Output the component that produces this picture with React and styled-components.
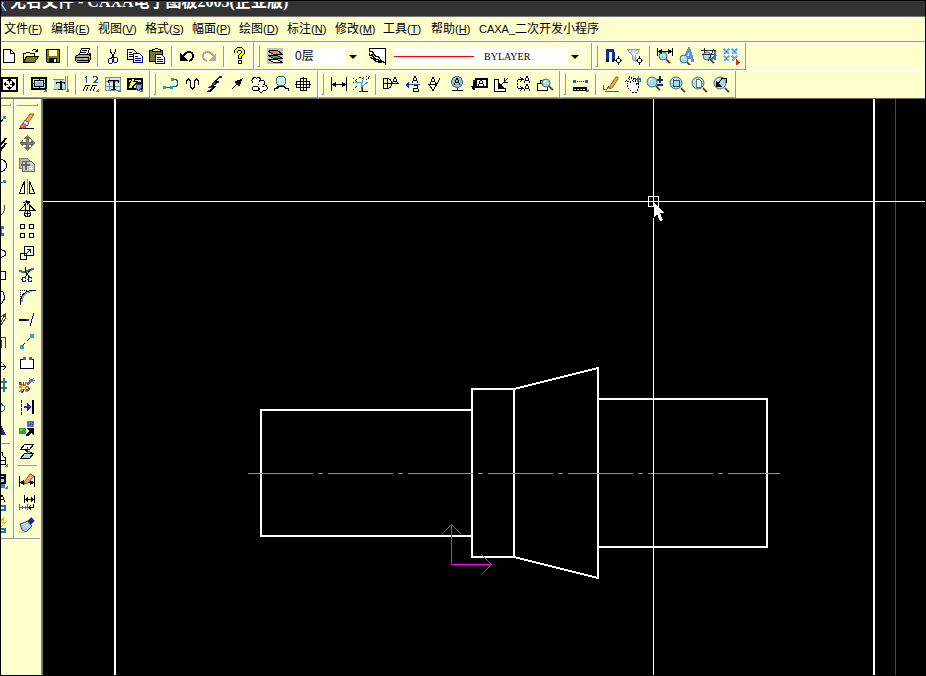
import React from 'react';
import styled, { createGlobalStyle } from 'styled-components';

const cream = '#ffffcc';
const shade = '#999999';

const GlobalStyle = createGlobalStyle`
  * { box-sizing: border-box; }
  html, body { margin: 0; padding: 0; background: #000; }
  body, button, select {
    font-family: "Liberation Sans", "Noto Sans CJK SC", sans-serif;
    font-size: 12px;
    color: #000;
  }
`;

const Window = styled.div`
  min-height: 100vh;
  display: flex;
  flex-direction: column;
  border: 1px solid #000;
  background: ${cream};
  overflow: hidden;
`;

const TitleBar = styled.header`
  height: 16px;
  flex: none;
  display: flex;
  align-items: flex-end;
  background: #333;
  border-top: 1px solid #3a2f55;
  border-bottom: 1px solid #777;
  overflow: hidden;
`;

const TitleLogo = styled.svg`
  flex: none;
  width: 7px;
  height: 14px;
`;

const Title = styled.h1`
  margin: 0;
  padding: 0 2px 5px;
  font: bold 16px/18px "Liberation Serif", "Noto Sans CJK SC", serif;
  color: #fff;
  white-space: nowrap;
`;

const MenuBar = styled.nav`
  height: 25px;
  flex: none;
  display: flex;
  align-items: center;
  padding-left: 3px;
  border-bottom: 1px solid ${shade};
`;

const MenuItem = styled.button`
  flex: none;
  min-width: ${(p) => (p.$wide ? 48 : 47)}px;
  padding: 0;
  border: 0;
  background: none;
  text-align: left;
  line-height: 18px;
  white-space: nowrap;
`;

const Accel = styled.span`
  font-size: 11px;
`;

const ToolRow = styled.div`
  height: 28px;
  flex: none;
  display: flex;
  border-top: 1px solid #fff;
`;

const Toolbar = styled.div`
  flex: none;
  display: flex;
  align-items: center;
  padding-right: 3px;
  margin-left: ${(p) => (p.$docked ? -3 : 0)}px;
  border-right: 1px solid ${shade};
  border-bottom: 1px solid ${shade};
  & + & { border-left: 1px solid #fff; }
`;

const Grip = styled.span`
  flex: none;
  width: ${(p) => (p.$flat ? 22 : 3)}px;
  height: ${(p) => (p.$flat ? 3 : 22)}px;
  margin: ${(p) => (p.$flat ? '4px 0' : '0 4px 0 2px')};
  border: 1px solid ${shade};
  border-top-color: #fff;
  border-left-color: #fff;
`;

const Divider = styled.span`
  flex: none;
  width: ${(p) => (p.$flat ? 20 : 2)}px;
  height: ${(p) => (p.$flat ? 2 : 21)}px;
  margin: ${(p) => (p.$flat ? '3px 1px' : '0 3px')};
  background: linear-gradient(${(p) => (p.$flat ? '180deg' : '90deg')}, ${shade} 50%, #fff 50%);
`;

const ToolButton = styled.button`
  flex: none;
  width: 22px;
  height: 22px;
  display: grid;
  place-items: center;
  padding: 0;
  border: 0;
  background: none;
`;

const Glyph = styled.svg`
  display: block;
  width: 18px;
  height: 18px;
  shape-rendering: crispEdges;
`;

const Combo = styled.label`
  position: relative;
  flex: none;
  width: ${(p) => (p.$wide ? 190 : 70)}px;
  margin: 0 5px;
`;

const ComboSelect = styled.select`
  appearance: none;
  display: block;
  width: 100%;
  height: 17px;
  padding: 0 16px 0 ${(p) => (p.$wide ? 91 : 4)}px;
  border: 0;
  border-radius: 0;
  background: #fff;
  font: ${(p) => (p.$wide ? '10px/17px "Liberation Serif", serif' : '12px/17px "Liberation Sans", "Noto Sans CJK SC", sans-serif')};
`;

const ComboArrow = styled.svg`
  position: absolute;
  top: 1px;
  right: 1px;
  width: 14px;
  height: 15px;
  background: ${cream};
  pointer-events: none;
`;

const LineSample = styled.span`
  position: absolute;
  top: 8px;
  left: 1px;
  width: 80px;
  height: 1px;
  background: #ff0000;
  pointer-events: none;
`;

const Workspace = styled.main`
  flex: 1;
  display: flex;
  border-top: 1px solid #666;
  min-height: 500px;
`;

const Docks = styled.aside`
  flex: none;
  display: flex;
  align-items: flex-start;
  padding-right: 1px;
  border-right: 2px solid #777;
`;

const Palette = styled.div`
  display: flex;
  flex-direction: column;
  align-items: center;
  padding: 0 2px 2px 2px;
  margin-left: ${(p) => (p.$docked ? -14 : 0)}px;
  border-bottom: 1px solid ${shade};
  & + & { border-left: 1px solid ${shade}; box-shadow: inset 1px 0 #fff; }
`;

const Canvas = styled.svg`
  flex: 1;
  min-width: 0;
  display: block;
  background: #000;
  cursor: crosshair;
`;

const P = ({ d, c = '#000', f = 'none', w = 1, dash }) => (
  <path d={d} stroke={c} fill={f} strokeWidth={w} strokeDasharray={dash} />
);
const F = ({ d, c = '#000' }) => <path d={d} fill={c} />;
const Lens = ({ x = 8, y = 7, r = 5 }) => (
  <g shapeRendering="auto">
    <P d={`M${x + r - 1} ${y + r - 1}l4 4`} c="#4c3a38" w={2} />
    <P d={`M${x + r} ${y + r - 1}l3 3`} c="#b98a70" />
    <circle cx={x} cy={y} r={r} fill="#a9dce6" stroke="#3f6f7a" />
    <path d={`M${x - r + 2} ${y}a${r - 2} ${r - 2} 0 0 1 ${r - 2} ${2 - r}`} stroke="#fff" fill="none" />
  </g>
);
const Corner = () => <F d="M17 13v4h-4z" c="#777" />;
const LetterA = ({ x, y, c = '#000' }) => <P d={`M${x} ${y + 7}l3-7 3 7M${x + 1} ${y + 4.5}h4`} c={c} />;

const icons = {
  new: <P d="M3.500 2.500h7l4 4v9h-11zM10.500 2.500v4h4" f="#fff" />,
  open: (
    <>
      <P d="M1.500 14.500v-8h2l1-1h3l1 1h4v3" f="#ffff80" />
      <P d="M1.500 15.500l3-6h12l-4 6z" f="#808000" />
      <P d="M9.500 4.500l2-2h2l2 2M15.500 1.500v3h-3" />
    </>
  ),
  save: (
    <>
      <P d="M2.500 2.500h13v13h-12l-1-1z" f="#808000" />
      <F d="M5 3h8v6H5z" c={cream} />
      <F d="M5 11h8v5H5z" />
      <F d="M10 12h2v3h-2z" c={cream} />
    </>
  ),
  print: (
    <>
      <P d="M5.500 7.500l2-6h8l-2 6M8 3.500h5M7 5.500h5" f="#fff" />
      <P d="M1.500 9.500l3-2h10l2-1v6l-2 3h-11l-2-2z" f="#aaa" />
      <P d="M2 10.500h12v5M3 13.500h11M15 9l1-1" />
      <F d="M10 11h3v1h-3z" c="#dddd22" />
    </>
  ),
  cut: (
    <>
      <P d="M6.500 1.500v3l4 7M11.500 1.500v3l-4 7" />
      <ellipse cx="6.500" cy="14" rx="2" ry="2.500" stroke="#000080" fill="none" />
      <ellipse cx="11.500" cy="13" rx="2" ry="2.500" stroke="#000080" fill="none" />
    </>
  ),
  copy: (
    <>
      <P d="M1.500 2.500h6l3 3v7h-9z" f="#fff" />
      <P d="M3 5.500h3M3 7.500h4M3 9.500h4" />
      <P d="M7.500 6.500h6l3 3v6h-9z" c="#000080" f="#fff" />
      <P d="M9 9.500h3M9 11.500h6M9 13.500h6" c="#000080" />
    </>
  ),
  paste: (
    <>
      <P d="M1.500 3.500h13v11h-13z" f="#77733f" />
      <P d="M4.500 4.500v-2h2l1-1h2l1 1h2v2z" f="#ffff66" />
      <P d="M7.500 7.500h6l3 3v6h-9z" c="#000080" f="#fff" />
      <P d="M9 10.500h4M9 12.500h6M9 14.500h6" c="#000080" />
    </>
  ),
  undo: (
    <>
      <P d="M5 9c3-5 10-5 10 0 0 3-2 4-4 5" w={2} />
      <F d="M2 6v8h8z" />
    </>
  ),
  redo: (
    <>
      <P d="M14 9C11 4 3 4 3 9c0 3 2 4 4 5" c="#aaa" w={2} />
      <F d="M16 6v8H8z" c="#aaa" />
    </>
  ),
  help: (
    <>
      <P d="M6 6V4l2-2h3l2 2v2l-3 3v3" w={4} />
      <P d="M6 6V4l2-2h3l2 2v2l-3 3v2" c="#ffff00" w={2} />
      <circle cx="10" cy="15" r="2" fill="#ffff00" stroke="#000" />
    </>
  ),
  layers: (
    <>
      <F d="M1 1h16v16H1z" c="#c0c0c0" />
      <P d="M2.500 12.500h9l5 3h-9z" f="#fff" />
      <P d="M2.500 8.500h9l5 3h-9z" f="#20c060" />
      <P d="M2.500 4.500l2-1h7l5 4h-9z" f="#ff7777" />
    </>
  ),
  linetype: (
    <>
      <F d="M2 2h15v15z" c="#fff" />
      <P d="M1 1.500h16.500v16" />
      <P d="M1.500 2v2l3 1 3 4 3 1 3 4 4 2M1.500 6v2l3 1 3 3 3 1 3 3M2 10l3 2 3 2 5 2" />
      <P d="M2 4h3M3 7h4M3 11h5M7 14h6" />
    </>
  ),
  magnet: (
    <>
      <P d="M3 14V5q0-2 2-2h2q2 0 2 2v9" c="#10309a" w={3} />
      <F d="M2 12h3v3H2zM8 12h2v3H8z" c="#101840" />
      <circle cx="14.500" cy="13.500" r="2" stroke="#000" fill={cream} />
      <P d="M14.500 9v3M14.500 15v3M11 13.500h2M16 13.500h2" />
    </>
  ),
  filter: (
    <>
      <P d="M1.500 2.500h12l-4 6v6l-3-2v-4z" c="#68a0df" f="#a9d0f4" />
      <P d="M3 4l8 4M12 4L6 8M7 3l2 7" c="#fff" />
      <circle cx="13.500" cy="13.500" r="2" stroke="#000" fill={cream} />
      <P d="M13.500 9v3M13.500 15v3M10 13.500h2M15 13.500h2" />
    </>
  ),
  findDim: (
    <>
      <Lens x={7} y={9} r={4} />
      <P d="M1.500 1v8M16.500 1v8M2 4.500h14" />
      <F d="M2 4.500l4-3v6zM16 4.500l-4-3v6z" />
    </>
  ),
  findText: (
    <>
      <P d="M6 12L11 2l4 13M8 10h6" c="#5c90ee" w={3} />
      <Lens x={6} y={12} r={4} />
    </>
  ),
  findCross: (
    <>
      <Lens x={7} y={9} r={4} />
      <P d="M1 3h15M4 1v5M2 7h14M14 2L8 14" c="#202838" />
      <P d="M11 13l5-5M15 4v9" c="#3478ba" w={2} />
    </>
  ),
  blocks: (
    <>
      <P d="M2 2l5 5M7 2L2 7M10 2l5 5M15 2l-5 5M2 9l5 5M7 9l-5 5M10 9l3 3M15 9l-5 5" c="#64b0f4" w={2} />
      <F d="M4 4h1v1H4zM12 4h1v1h-1zM4 11h1v1H4z" c="#246ca8" />
      <F d="M14 12l4 3-4 4z" c="#ee2415" />
    </>
  ),
  fitAll: (
    <>
      <P d="M1.500 2.500h15v13h-15z" w={2} f="#fff" />
      <F d="M9 3l3 3H6zM9 15l3-3H6zM3 9l3-3v6zM15 9l-3-3v6z" />
      <P d="M5 9.500h3M10 9.500h3M9.500 5v3M9.500 11v3" />
    </>
  ),
  frame: (
    <>
      <P d="M2 3h14v11H2z" w={2} f="#bde7ed" />
      <P d="M4.500 5.500h9v6h-9zM9 2v4M9 11v3M2 8.500h3M13 8.500h3" />
      <F d="M6 7h6v4H6z" c="#8ab9e8" />
      <Corner />
    </>
  ),
  titleBlock: (
    <>
      <F d="M2 4h11v10H2z" c="#b9dfe6" />
      <P d="M1 4.500h11M15.500 1v14M13.500 1v13M1 14.500h13" c="#6e8c98" />
      <P d="M4 7h9M4.500 7v2M12.500 7v2M6 14h5" />
      <P d="M9 6v8" w={2} />
      <Corner />
    </>
  ),
  numbering: (
    <>
      <P d="M4.500 1v7M3 2.500h2M11 2.500l1-1h2l1 1v2l-3 3h4" c="#1b56a0" />
      <P d="M1 16l3-6h4M8 16l3-6h4M4 16l2-4M11 16l2-4" />
      <Corner />
    </>
  ),
  table: (
    <>
      <P d="M1.500 2.500h15v13h-15zM1 6.500h15M1 11.500h15M5.500 2v13" c="#6d929a" f="#ceedf0" />
      <P d="M4 5h11M4.500 5v3M14.500 5v3M7 14h5" />
      <P d="M9.500 5v9" w={2} />
      <Corner />
    </>
  ),
  tableEdit: (
    <>
      <P d="M1.500 3.500h14v10h-14zM1 7.500h14M6.500 3v10" f="#d7dabb" w={2} />
      <P d="M3 11l3-8h4L8 6h4l-7 8" f="#ffff00" />
      <P d="M10 9h5v4l-2 3-3-2z" f="#7f9ccc" c="#334f80" />
      <Corner />
    </>
  ),
  chain: (
    <>
      <P d="M2 12h9q5 0 5-4t-6-4" c="#005d84" />
      <F d="M1 11h3v3H1zM8 11h3v3H8zM9 3h3v3H9z" c="#19a4b8" />
    </>
  ),
  wave: <P d="M2.500 9V6l2-2 2 2v6l2 2 2-2V6l2-2 2 2v4" />,
  zigzag: (
    <>
      <P d="M2 15.500h2l4-4h-3l6-4h-3l6-6h2" c="#1741c5" w={2} />
      <P d="M1 16.500h3l5-5h-3l6-5h-3l6-5" />
    </>
  ),
  arrow: (
    <>
      <P d="M4 14L12 6" w={1} />
      <F d="M15 3l-4 9-5-5z" />
    </>
  ),
  cloud: (
    <>
      <P d="M3.500 7.500c-4-1 0-7 3-4 2-3 5 0 3 3 3-3 7 0 4 3 6 1 4 7 0 6-2 4-6 1-4-2M2.500 13.500c0-3 6-3 6 0s-6 3-6 0z" f="#fffff0" />
      <F d="M8 9h1v1H8zM12 11h2v1h-2z" />
    </>
  ),
  balloon: (
    <>
      <circle cx="9" cy="6" r="5" fill="#cdeff2" stroke="#35727b" />
      <P d="M2.500 16v-3h3l2-2h4l2 2h3v3M6 11l-2 3M12 11l2 3" />
    </>
  ),
  crossView: <P d="M2.500 6.500h13v6h-13zM6.500 3.500h6v12h-6zM1 9.500h16M9.500 2v14" />,
  dimension: (
    <>
      <P d="M1.500 2v14M16.500 2v14M2 9.500h14" />
      <F d="M2 9.500l4-3v6zM16 9.500l-4-3v6z" />
    </>
  ),
  coordinate: (
    <>
      <P d="M1 3l5 5M1 8l4-4M1 15l4-4M7 2l4 2M14 1l3 3M14 5l4-4" dash="2 1" />
      <P d="M10 11v5M7 16h9" />
      <P d="M3 7l7 1 2-6M9 8v9M9 12l7-5" c="#329eff" />
    </>
  ),
  datumA: (
    <>
      <P d="M1.500 3.500h3q5 0 5 5t-5 5h-3zM1 8.500h16M5.500 4v9" />
      <LetterA x={10} y={2} />
    </>
  ),
  datumAB: (
    <>
      <LetterA x={8} y={1} />
      <P d="M9.500 10.500h4v3h-4v3h5v-3" />
      <P d="M2 9h14" c="#185bee" />
      <F d="M1 10l4-3v6z" c="#0030cc" />
    </>
  ),
  roughness: (
    <>
      <P d="M2 9.500h9M3 9l4 7 7-13" />
      <LetterA x={4} y={2} />
    </>
  ),
  globeA: (
    <>
      <circle cx="9" cy="7" r="5.500" fill="#8dc2d4" stroke="#40778a" />
      <LetterA x={6} y={3} />
      <P d="M4 15.500h11M9.500 13v3" />
    </>
  ),
  noteA: (
    <>
      <P d="M5.500 3.500h11v8h-11z" w={2} f="#fff" />
      <P d="M3.500 15V5.500h3" w={2} />
      <LetterA x={8} y={4} />
      <F d="M1 11h6l-3 5z" />
    </>
  ),
  corner: (
    <>
      <P d="M2.500 4v12.500h11v-3h-7V4z" f="#fff" />
      <P d="M7 12l5-5 4-4M12 3v4h4" />
      <F d="M7 13V8l5 5z" />
    </>
  ),
  replaceA: (
    <>
      <P d="M3.500 13.500h5M3.500 4.500h5" />
      <P d="M3.500 5v8" dash="2 1" />
      <P d="M6 2l3 2.500-3 2M6 11l3 2.500-3 2" />
      <LetterA x={10} y={1} />
      <LetterA x={10} y={9} />
    </>
  ),
  findBox: (
    <>
      <P d="M1.500 8.500h10v7h-10zM4 8V5h8" />
      <Lens x={10} y={8} r={4} />
    </>
  ),
  measure: (
    <>
      <P d="M3 6.500h12" dash="1 1" />
      <F d="M1 5h3v3H1zM13 5h3v3h-3z" c="#1761ca" />
      <P d="M1.500 12.500h13v3h-13z" f="#000" />
      <P d="M2 14h12" c="#e8e838" dash="2 1" />
      <Corner />
    </>
  ),
  brush: (
    <>
      <P d="M1 10v5l4-1 2-3M3 16.500h14" c="#785332" />
      <g shapeRendering="auto"><P d="M8 11L14 2h2v2L10 13l-3 1z" c="#a66622" f="#f3a13f" /></g>
    </>
  ),
  pan: (
    <>
      <P d="M4 9L1.500 6.500l1-1 4 2-2-5 2-1 3 5V3l2 1 1 5 2-1v4l-2 5H8L3 12z" f="#fff" dash="2 1" />
      <P d="M11 4.500h6M14.500 1v7M13 3h3v3h-3z" c="#2c6f8f" />
    </>
  ),
  zoomSigns: (
    <>
      <Lens x={6} y={7} />
      <P d="M11 5h6M14 1v7M11 10h6" c="#102b72" w={2} />
    </>
  ),
  zoomWindow: (
    <>
      <Lens x={8} y={8} r={6} />
      <P d="M5.500 4v7h6M5 5.500h6.500V12" c="#254e7d" />
    </>
  ),
  zoomPage: (
    <>
      <Lens x={8} y={8} r={6} />
      <P d="M6.500 4.500h3l2 2v6h-5z" c="#68716a" f="#f2f4d9" />
    </>
  ),
  zoomBack: (
    <>
      <Lens x={8} y={8} r={6} />
      <P d="M14.500 8V3.500H10L6 9" />
      <F d="M4 12V6l6 6z" />
    </>
  ),
  eraser: (
    <>
      <P d="M1 16.500h15" />
      <g shapeRendering="auto">
        <P d="M7 9l5-7h4l-6 9z" c="#805024" f="#ffb038" />
        <P d="M2 15l3-4 4 2-2 3H3z" c="#a5453b" f="#ff6a60" />
        <P d="M5 11l2-3 4 3-2 3z" c="#557" f="#eef" />
      </g>
    </>
  ),
  move: (
    <>
      <F d="M9 1l4 4H5zM9 17l4-4H5zM1 9l4-4v8zM17 9l-4-4v8z" c="#777" />
      <P d="M9 3v12M3 9h12" c="#666" w={3} />
      <P d="M9.500 2v14M2 9.500h14" c="#22aaaa" />
    </>
  ),
  duplicate: (
    <>
      <P d="M1.500 2.500h8l3 3v7h-11z" c="#777" f="#bbb" />
      <P d="M4.500 5.500h9l3 3v7h-12z" c="#666" f="#ccc" />
      <P d="M3 9h9M8 5v9" c="#666" w={2} />
      <P d="M11 10h4M11 12.500h4" c="#fff" />
    </>
  ),
  mirror: (
    <>
      <P d="M6.500 3v12h-5zM11.500 3v12h5z" />
      <P d="M9.500 1v16" c="#22aaaa" />
    </>
  ),
  rotate: (
    <>
      <P d="M2 10.500h5v-6zM5 3l4-2 3 2M11.500 5v5h5zM9.500 10v7M6 13.500h7" />
      <circle cx="9.500" cy="13.500" r="3" stroke="#000" fill="none" />
      <F d="M8 0l5 2-4 3z" />
    </>
  ),
  array: <P d="M2.500 2.500h4v4h-4zM11.500 2.500h4v4h-4zM2.500 11.500h4v4h-4zM11.500 11.500h4v4h-4z" f="#fff" />,
  scale: <P d="M6.500 2.500h9v9h-9zM2.500 9.500h6v6h-6zM8 10l4-4M9 5.500h3.500V9" f="#fff" />,
  trim: (
    <>
      <P d="M1 5l5 1 5-2 5-1" c="#228888" w={2} />
      <P d="M7.500 1v5l4 5M12.500 3l-5 8" />
      <ellipse cx="6" cy="13.500" rx="2" ry="2.500" stroke="#1b1bc9" fill="none" />
      <ellipse cx="12" cy="13.500" rx="2" ry="2.500" stroke="#1b1bc9" fill="none" />
    </>
  ),
  fillet: (
    <>
      <P d="M2 2.500h8M2.500 2v9" dash="1 1" />
      <P d="M4 14q0-10 10-11" c="#6aabde" w={2} />
      <P d="M2.500 17v-4q1-9 10-10.500h5" />
    </>
  ),
  extend: (
    <>
      <P d="M1 10h8" w={2} />
      <P d="M8 10h3" c="#2020dd" w={2} />
      <P d="M12 16l4-13" />
    </>
  ),
  stretchLine: (
    <>
      <P d="M3 15L14 4" dash="6 2" />
      <F d="M2 13h4v4H2zM12 2h4v4h-4z" c="#22a9ba" />
    </>
  ),
  breakLine: (
    <>
      <P d="M6 5.500H2.500v9h13v-9H12" f="#fff" />
      <F d="M5 3h3v3H5zM11 3h3v3h-3z" c="#207b8c" />
    </>
  ),
  explode: (
    <>
      <P d="M2 6l7 10M9 6l-7 10M1 11h10" c="#f47b21" w={2} />
      <P d="M5.500 6v10M1 8l3 1M8 13l3 2" c="#bb2d20" />
      <F d="M1 6h2v2H1zM10 12h2v2h-2zM3 15h2v2H3z" c="#3050dd" />
      <P d="M9 9l5-5" c="#3b66de" w={2} />
      <P d="M11 2l5 5M16 2l-4 5M11 4h6" c="#4b76de" />
      <F d="M4 10h3v3H4z" c="#ffff99" />
    </>
  ),
  shift: (
    <>
      <P d="M3.500 2v15" dash="3 1" />
      <P d="M15 2v14" w={2} />
      <P d="M6 9h4" c="#2020dd" w={2} />
      <F d="M9 5l4 4-4 4z" c="#2020dd" />
    </>
  ),
  blockSwap: (
    <>
      <F d="M9 1h7v6H9z" c="#6778aa" />
      <P d="M10 2.500h5M10 4.500h5" c="#3040c0" dash="1 1" />
      <F d="M1 8h7v6H1z" c="#23a832" />
      <F d="M2 9h3v2H2z" c="#55dd66" />
      <P d="M9 16l4-5" w={3} />
      <F d="M8 8h8v8z" />
    </>
  ),
  project: (
    <>
      <P d="M6.500 2.500h9l-4 5h-9z" f="#fff" />
      <P d="M6.500 11.500h9l-4 5h-9z" f="#b6dbed" />
      <P d="M5 7l9 4" />
      <P d="M9.500 5v7M8 9h4" c="#24428b" />
    </>
  ),
  editDim: (
    <>
      <P d="M1.500 4v11M16.500 4v11M2 10.500h14" />
      <F d="M2 10.500l4-3v6zM16 10.500l-4-3v6z" />
      <g shapeRendering="auto"><P d="M7 9l5-7 4 2-6 7-4 1z" c="#944b32" f="#f3a580" /></g>
    </>
  ),
  dimArrow: (
    <>
      <P d="M6.500 1v8M16.500 1v8M7 5.500h9" />
      <F d="M7 5.500l3-3v6zM16 5.500l-3-3v6z" />
      <P d="M1.500 10v6M9.500 10v6M2 13.500h7M4.500 12v3M7.500 12v3" c="#2571c1" />
      <P d="M15.500 10v3h-4M13 11l-2 2.500 2 2" />
    </>
  ),
  paint: (
    <g shapeRendering="auto">
      <P d="M2 8l8-3 4 5-6 6-4-2z" c="#42506b" f="#a6cde0" />
      <P d="M5 8l5 5M7 7l5 5" c="#eef" />
      <P d="M11 7l4-4" c="#2020a0" w={5} />
      <P d="M1 16h6" c="#8cbccb" />
    </g>
  ),
  line: (
    <>
      <P d="M8 12l5-6" />
      <F d="M12 4h3v3h-3z" c="#1c8de0" />
    </>
  ),
  parallel: <P d="M8 13l7-9M9 17l6-8" w={2} />,
  circle: <circle cx="9.500" cy="9.500" r="6" fill="#fff" stroke="#000" />,
  arc: (
    <>
      <P d="M8 6.500q2-2 5-2" c="#1c6d90" />
      <F d="M12 2h3v3h-3z" c="#1c8de0" />
    </>
  ),
  spline: <P d="M8 15q6 0 6-10" c="#554433" />,
  point: <F d="M8 4h5v3h-2v4h2v3H8z" c="#2275dd" />,
  ellipse: <ellipse cx="8" cy="9.500" rx="7" ry="4" fill="#fff" stroke="#222" />,
  rect: <P d="M2 5.500h12.500v8H2z" f="#fff" />,
  polygon: <P d="M7 2l5 2 2 6-3 5-4 1" f="#fff" />,
  hatchPen: <P d="M8 8l6-4v5l-4 6H8M9 13l5-8" c="#5b4a39" />,
  profile: <P d="M7 5.500h7.500v10M8 8.500h2.500V16" c="#544434" />,
  axis: <P d="M7 12.500h7M12 10l3 3-3 3M8 7l3 2" />,
  hatch: <P d="M9 2v14M13 2v14M7 6h9M7 12h9" c="#247994" w={2} />,
  contour: <P d="M9 5l4 3q2 5-4 6" c="#257283" f="#fff" />,
  textTool: <F d="M8 5h2l5 10H7v-2h3z" c="#202080" />,
  blockTool: (
    <>
      <P d="M8 2.500h3v3l3 2v3H8M7 10.500h7v4H7" f="#fff" />
      <Corner />
    </>
  ),
  library: (
    <>
      <P d="M8 2.500h6v8H8zM8 5.500h6" f="#bcd" w={2} />
      <F d="M9 12h5v4H9z" c="#2690aa" />
      <Corner />
    </>
  ),
  textA: (
    <>
      <LetterA x={8} y={1} />
      <P d="M8 11.500h6v4H8z" c="#2077a0" f="#d9f4ff" w={2} />
    </>
  ),
  flash: (
    <>
      <P d="M8 7l5-6-1 5h3l-6 6" c="#e6bd16" f="#ffff44" />
      <P d="M8 12.500h6v3H8z" c="#2077a0" f="#d9f4ff" w={2} />
    </>
  ),
};

const fileTools = ['new', 'open', 'save', '|', 'print', '|', 'cut', 'copy', 'paste', '|', 'undo', 'redo', '|', 'help'];
const snapTools = ['magnet', 'filter', '|', 'findDim', 'findText', 'findCross', 'blocks'];
const sheetTools = ['fitAll', '|', 'frame', 'titleBlock', '|', 'numbering', 'table', 'tableEdit'];
const curveTools = ['chain', 'wave', 'zigzag', 'arrow', 'cloud', 'balloon', 'crossView'];
const dimTools = ['dimension', 'coordinate', '|', 'datumA', 'datumAB', 'roughness', 'globeA', 'noteA', 'corner', 'replaceA', 'findBox'];
const viewTools = ['measure', '|', 'brush', 'pan', 'zoomSigns', 'zoomWindow', 'zoomPage', 'zoomBack'];
const drawTools = ['line', 'parallel', 'circle', 'arc', 'spline', 'point', 'ellipse', 'rect', 'polygon', 'hatchPen', 'profile', 'axis', 'hatch', 'contour', 'textTool', '|', 'blockTool', 'library', 'textA', 'flash'];
const editTools = ['eraser', 'move', 'duplicate', 'mirror', 'rotate', 'array', 'scale', 'trim', 'fillet', 'extend', 'stretchLine', 'breakLine', 'explode', 'shift', 'blockSwap', 'project', '|', 'editDim', 'dimArrow', 'paint'];

const menus = [
  ['文件', 'F'], ['编辑', 'E'], ['视图', 'V'], ['格式', 'S'], ['幅面', 'P'],
  ['绘图', 'D', true], ['标注', 'N', true], ['修改', 'M', true], ['工具', 'T', true], ['帮助', 'H', true],
];

const Tools = ({ names, flat }) =>
  names.map((name, i) =>
    name === '|' ? (
      <Divider key={i} $flat={flat} />
    ) : (
      <ToolButton key={i} type="button" aria-label={name}>
        <Glyph viewBox="0 0 18 18" aria-hidden="true">{icons[name]}</Glyph>
      </ToolButton>
    )
  );

const DropArrow = () => (
  <ComboArrow viewBox="0 0 14 15" aria-hidden="true">
    <path d="M3 6h8l-4 4z" />
  </ComboArrow>
);

const Drawing = () => (
  <Canvas role="img" aria-label="CAD" shapeRendering="crispEdges">
    <g transform="translate(-43 -99)" fill="none" stroke="#fff">
      <path d="M115 99v4000M874 99v4000" strokeWidth="2" />
      <path d="M895.500 99v4000" stroke="#cc1018" />
      <g strokeWidth="2">
        <path d="M472 410H261v126h211" />
        <path d="M472 389h42v168h-42z" />
        <path d="M514 389l84-21v210l-84-21" />
        <path d="M598 399h169v148H598" />
      </g>
      <path d="M248 473.500h532" stroke="#20e820" strokeDasharray="65 5 5 5" />
      <path d="M451.500 564.500v-40M441.500 534.500l10-10 10 10M451.500 564.500h40M481.500 554.500l10 10-10 10" stroke="#ff00ff" />
      <path d="M43 201.500h4000M653.500 99v107M653.500 218v4000M648.500 196.500h10v10h-10z" />
      <path d="M654 202v15l3-3 3 7 3-1-3-7h4z" fill="#fff" stroke="none" />
    </g>
  </Canvas>
);

export default function App() {
  return (
    <>
      <GlobalStyle />
      <Window>
        <TitleBar>
          <TitleLogo viewBox="0 0 7 14" aria-hidden="true">
            <path d="M0 0h3l-1 3 3 6H2L0 5z" fill="#2860d8" />
            <path d="M2 0L1 3l4 6" stroke="#fff" fill="none" />
          </TitleLogo>
          <Title>无名文件 - CAXA电子图板2005(企业版)</Title>
        </TitleBar>
        <MenuBar>
          {menus.map(([label, key, wide]) => (
            <MenuItem key={label} type="button" $wide={wide}>
              {label}<Accel>(<u>{key}</u>)</Accel>
            </MenuItem>
          ))}
          <MenuItem type="button"><Accel>CAXA_</Accel>二次开发小程序</MenuItem>
        </MenuBar>
        <ToolRow>
          <Toolbar $docked><Tools names={fileTools} /></Toolbar>
          <Toolbar>
            <Grip />
            <Tools names={['layers']} />
            <Combo>
              <ComboSelect aria-label="图层" defaultValue="0层"><option>0层</option></ComboSelect>
              <DropArrow />
            </Combo>
            <Tools names={['linetype']} />
            <Combo $wide>
              <ComboSelect $wide aria-label="线型" defaultValue="BYLAYER"><option>BYLAYER</option></ComboSelect>
              <LineSample />
              <DropArrow />
            </Combo>
          </Toolbar>
          <Toolbar><Grip /><Tools names={snapTools} /></Toolbar>
        </ToolRow>
        <ToolRow>
          <Toolbar $docked><Tools names={sheetTools} /></Toolbar>
          <Toolbar><Grip /><Tools names={curveTools} /></Toolbar>
          <Toolbar><Grip /><Tools names={dimTools} /></Toolbar>
          <Toolbar><Grip /><Tools names={viewTools} /></Toolbar>
        </ToolRow>
        <Workspace>
          <Docks>
            <Palette $docked><Grip $flat /><Tools names={drawTools} flat /></Palette>
            <Palette><Grip $flat /><Tools names={editTools} flat /></Palette>
          </Docks>
          <Drawing />
        </Workspace>
      </Window>
    </>
  );
}
